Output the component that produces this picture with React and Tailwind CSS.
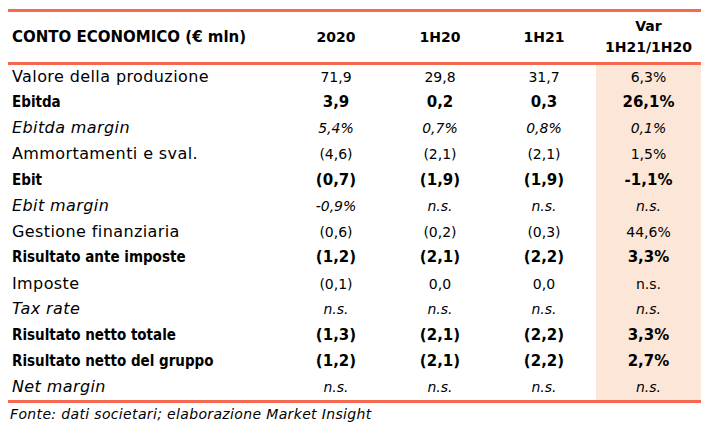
const rows = [
  { label: 'Valore della produzione', v: ['71,9', '29,8', '31,7', '6,3%'], s: 'normal' },
  { label: 'Ebitda', v: ['3,9', '0,2', '0,3', '26,1%'], s: 'bold' },
  { label: 'Ebitda margin', v: ['5,4%', '0,7%', '0,8%', '0,1%'], s: 'italic' },
  { label: 'Ammortamenti e sval.', v: ['(4,6)', '(2,1)', '(2,1)', '1,5%'], s: 'normal' },
  { label: 'Ebit', v: ['(0,7)', '(1,9)', '(1,9)', '-1,1%'], s: 'bold' },
  { label: 'Ebit margin', v: ['-0,9%', 'n.s.', 'n.s.', 'n.s.'], s: 'italic' },
  { label: 'Gestione finanziaria', v: ['(0,6)', '(0,2)', '(0,3)', '44,6%'], s: 'normal' },
  { label: 'Risultato ante imposte', v: ['(1,2)', '(2,1)', '(2,2)', '3,3%'], s: 'bold' },
  { label: 'Imposte', v: ['(0,1)', '0,0', '0,0', 'n.s.'], s: 'normal' },
  { label: 'Tax rate', v: ['n.s.', 'n.s.', 'n.s.', 'n.s.'], s: 'italic' },
  { label: 'Risultato netto totale', v: ['(1,3)', '(2,1)', '(2,2)', '3,3%'], s: 'bold' },
  { label: 'Risultato netto del gruppo', v: ['(1,2)', '(2,1)', '(2,2)', '2,7%'], s: 'bold' },
  { label: 'Net margin', v: ['n.s.', 'n.s.', 'n.s.', 'n.s.'], s: 'italic' },
]

// label cell / value cell styles per row kind
const labelStyle = {
  normal: 'text-[16px] tracking-[0.4px]',
  bold: "text-[15px] font-bold font-['DejaVu_Sans_Condensed','DejaVu_Sans',sans-serif]",
  italic: 'text-[16px] italic tracking-[0.4px]',
}
const valueStyle = {
  normal: 'text-[14px]',
  bold: 'text-[15px] font-bold',
  italic: 'text-[14px] italic',
}

export default function App() {
  return (
    <div className="w-[709px] h-[427px] bg-white pt-[9px] px-2 text-black font-['DejaVu_Sans',sans-serif]">
      <table className="w-[693px] border-collapse table-fixed">
        <colgroup>
          <col className="w-[276px]" />
          <col className="w-[104px]" />
          <col className="w-[104px]" />
          <col className="w-[104px]" />
          <col className="w-[105px]" />
        </colgroup>
        <thead>
          <tr className="h-[53px] border-t-[3px] border-b-[3px] border-[#f4694f] font-bold">
            <th className="text-left pl-1 text-[15px]">CONTO ECONOMICO (€ mln)</th>
            <th className="text-center text-[14px]">2020</th>
            <th className="text-center text-[14px]">1H20</th>
            <th className="text-center text-[14px]">1H21</th>
            <th className="text-center text-[14px] leading-[21px]">Var<br />1H21/1H20</th>
          </tr>
        </thead>
        <tbody>
          {rows.map(r => (
            <tr key={r.label} className="h-[25.9px]">
              <td className={`pl-1 p-0 leading-none ${labelStyle[r.s]}`}>{r.label}</td>
              <td className={`text-center p-0 leading-none ${valueStyle[r.s]}`}>{r.v[0]}</td>
              <td className={`text-center p-0 leading-none ${valueStyle[r.s]}`}>{r.v[1]}</td>
              <td className={`text-center p-0 leading-none ${valueStyle[r.s]}`}>{r.v[2]}</td>
              <td className={`text-center p-0 leading-none bg-[#fce6d7] ${valueStyle[r.s]}`}>{r.v[3]}</td>
            </tr>
          ))}
        </tbody>
      </table>
      <div className="border-t-[3px] border-[#f4694f] w-[693px]" />
      <p className="pl-0.5 pt-[1px] text-[14px] italic tracking-[0.35px]">Fonte: dati societari; elaborazione Market Insight</p>
    </div>
  )
}
